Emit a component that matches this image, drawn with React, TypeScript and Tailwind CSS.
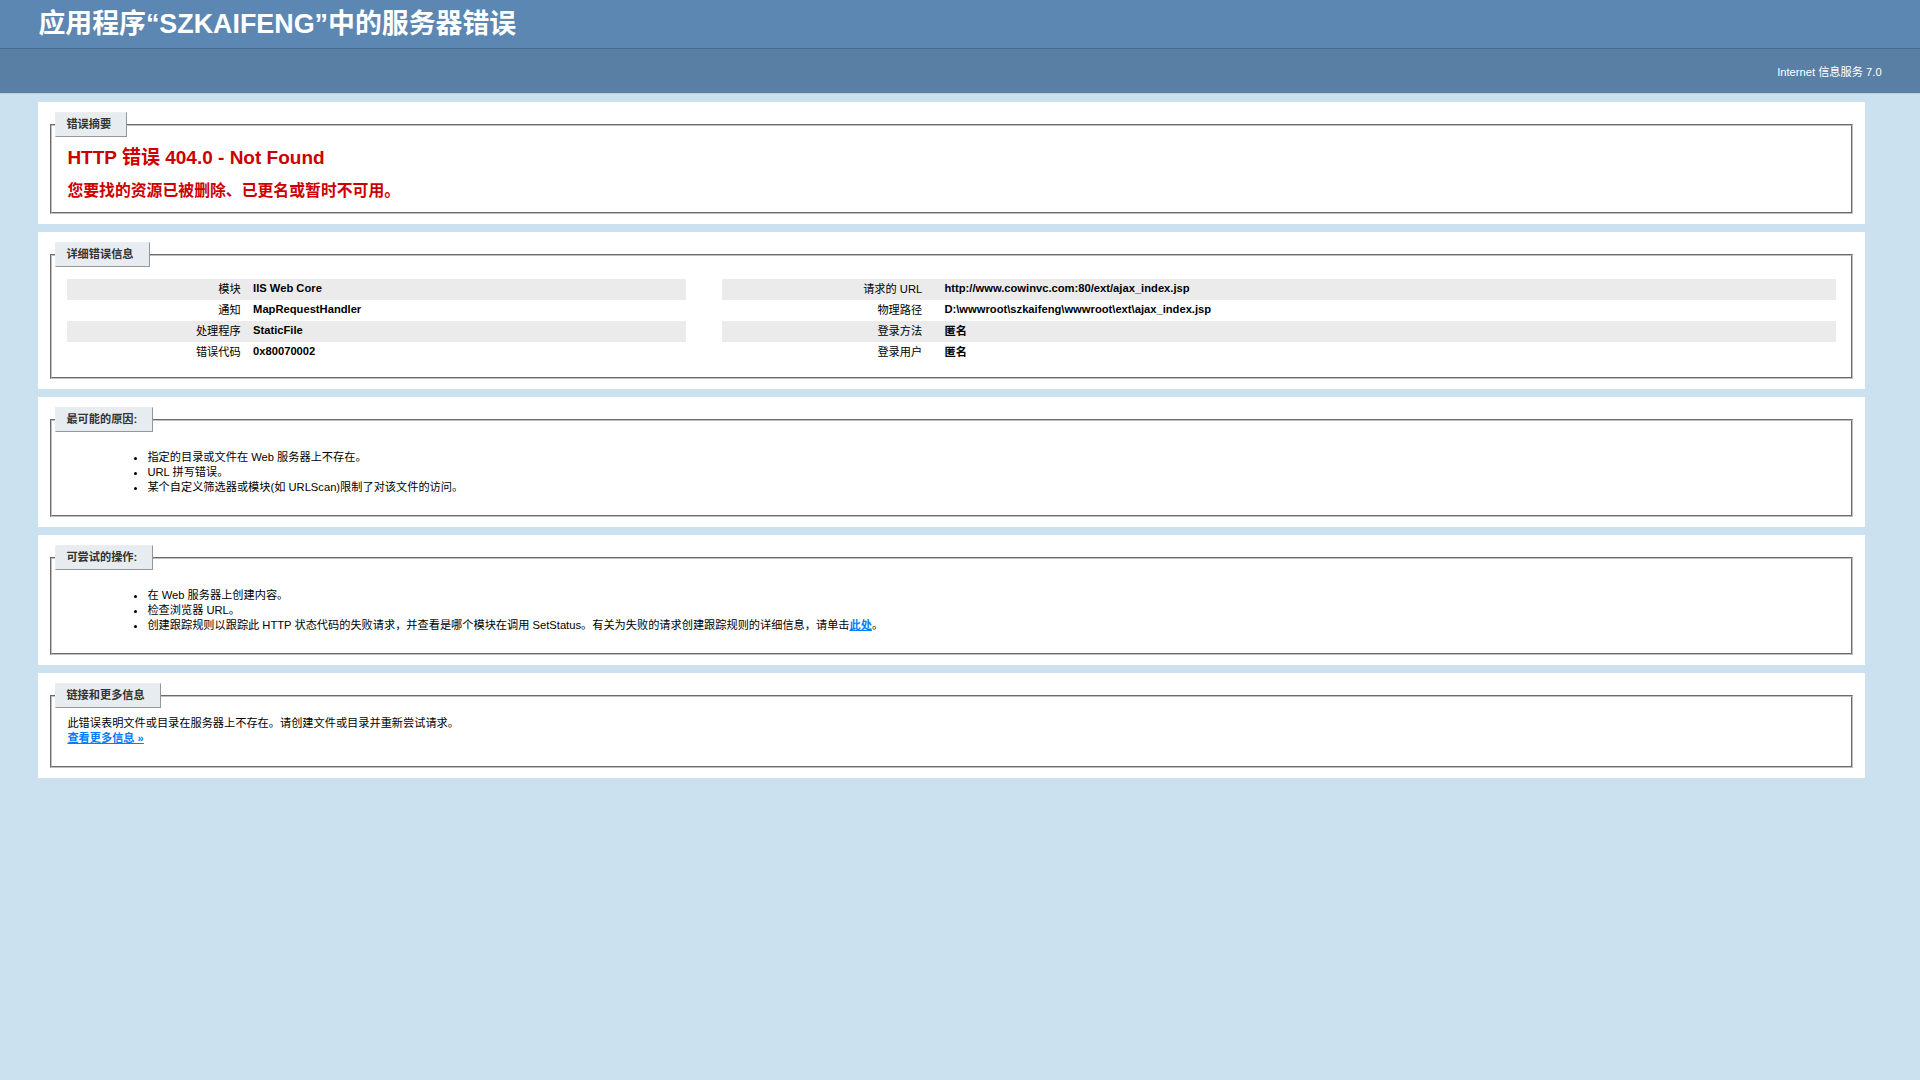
import { ReactNode } from "react";

interface SectionProps {
  title: string;
  children: ReactNode;
}

const Section = ({ title, children }: SectionProps) => {
  return (
    <div className="mt-2 box-content w-[96%] bg-white p-2.5">
      <fieldset className="mx-0.5 border-2 border-[#c0c0c0] px-[15px] pb-2.5 [border-style:groove]">
        <legend className="-ml-3 mb-2 border border-t-[#ededed] border-r-[#969696] border-b-[#969696] border-l-[#ededed] bg-[#e7ecf0] pt-1 pr-[15px] pb-1 pl-2.5 font-bold text-[#333333]">
          {title}
        </legend>
        {children}
      </fieldset>
    </div>
  );
};

interface DetailRow {
  label: string;
  value: string;
  cjk?: boolean;
}

const DetailTable = ({ rows, thClass }: { rows: DetailRow[]; thClass: string }) => {
  return (
    <table className="my-1 w-full">
      <tbody>
        {rows.map((row, i) => (
          <tr key={row.label} className={i % 2 === 0 ? "bg-[#ebebeb]" : ""}>
            <th className={`${thClass} py-[3px] pr-[2%] text-right align-top font-normal`}>{row.label}</th>
            <td className={`py-[3px] text-left align-top font-bold ${row.cjk ? "leading-3.75" : "leading-3.25"}`}>
              {row.value}
            </td>
          </tr>
        ))}
      </tbody>
    </table>
  );
};

const leftRows: DetailRow[] = [
  { label: "模块", value: "IIS Web Core" },
  { label: "通知", value: "MapRequestHandler" },
  { label: "处理程序", value: "StaticFile" },
  { label: "错误代码", value: "0x80070002" },
];

const rightRows: DetailRow[] = [
  { label: "请求的 URL", value: "http://www.cowinvc.com:80/ext/ajax_index.jsp" },
  { label: "物理路径", value: "D:\\wwwroot\\szkaifeng\\wwwroot\\ext\\ajax_index.jsp" },
  { label: "登录方法", value: "匿名", cjk: true },
  { label: "登录用户", value: "匿名", cjk: true },
];

export default function App() {
  return (
    <div className="min-h-screen bg-[#cbe1ef] font-['Liberation_Sans','Noto_Sans_CJK_SC',sans-serif] text-[11.2px] leading-3.75 text-black">
      <div className="bg-[#5c87b2] px-[2%] py-1.5">
        <h1 className="text-[26.88px] leading-9 font-bold text-white">应用程序“SZKAIFENG”中的服务器错误</h1>
      </div>
      <div className="border-t border-b border-t-[#4a6c8e] border-b-[#c1cfdd] bg-[#5a7fa5] px-[2%] pt-4 pb-3.25 text-right text-white">
        <p>Internet 信息服务 7.0</p>
      </div>
      <div className="ml-[2%]">
        <Section title="错误摘要">
          <h2 className="text-[19px] leading-6.25 font-bold text-[#cc0000]">HTTP 错误 404.0 - Not Found</h2>
          <h3 className="mt-2.5 text-[15.85px] leading-5.5 font-bold text-[#cc0000]">您要找的资源已被删除、已更名或暂时不可用。</h3>
        </Section>
        <Section title="详细错误信息">
          <div className="flex">
            <div className="mr-[2%] w-7/20">
              <DetailTable rows={leftRows} thClass="w-3/10" />
            </div>
            <div className="w-63/100">
              <DetailTable rows={rightRows} thClass="w-1/5" />
            </div>
          </div>
        </Section>
        <Section title="最可能的原因:">
          <ul className="my-2.5 ml-10 list-disc pl-10">
            <li>指定的目录或文件在 Web 服务器上不存在。</li>
            <li>URL 拼写错误。</li>
            <li>某个自定义筛选器或模块(如 URLScan)限制了对该文件的访问。</li>
          </ul>
        </Section>
        <Section title="可尝试的操作:">
          <ul className="my-2.5 ml-10 list-disc pl-10">
            <li>在 Web 服务器上创建内容。</li>
            <li>检查浏览器 URL。</li>
            <li>
              创建跟踪规则以跟踪此 HTTP 状态代码的失败请求，并查看是哪个模块在调用 SetStatus。有关为失败的请求创建跟踪规则的详细信息，请单击
              <a href="#" className="font-bold text-[#007eff] underline">此处</a>。
            </li>
          </ul>
        </Section>
        <Section title="链接和更多信息">
          <p className="mb-2.5">
            此错误表明文件或目录在服务器上不存在。请创建文件或目录并重新尝试请求。
            <br />
            <a href="#" className="font-bold text-[#007eff] underline">查看更多信息 »</a>
          </p>
        </Section>
      </div>
    </div>
  );
}
